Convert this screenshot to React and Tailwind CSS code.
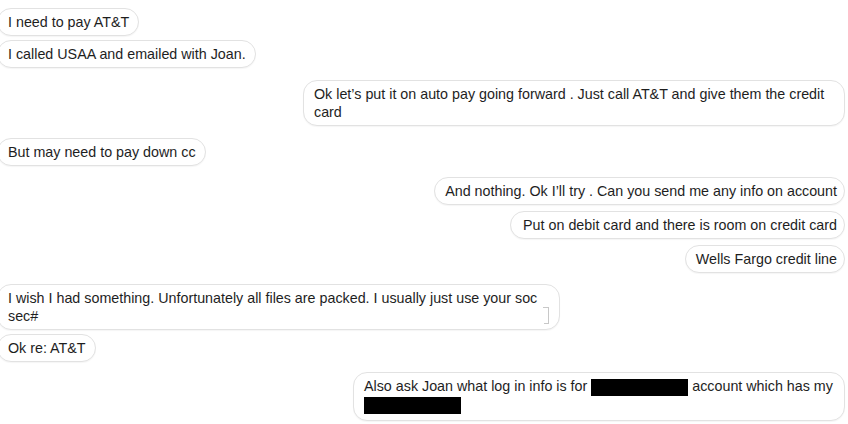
import React from 'react';

const Redacted = ({ className = '' }) => (
  <span className={`inline-block bg-black align-middle ${className}`} />
);

const Bubble = ({ side = 'left', className = '', children }) => (
  <div className={`flex ${side === 'right' ? 'justify-end' : 'justify-start'}`}>
    <div
      className={`rounded-[14px] border border-[#e2e2e2] bg-white py-[4px] text-[14.3px] leading-[18px] text-[#1e1e1e] shadow-[0_1px_1px_rgba(0,0,0,0.04)] ${
        side === 'right' ? 'pl-[10px] pr-[7px]' : 'pl-[10px] pr-[9px]'
      } ${className}`}
    >
      {children}
    </div>
  </div>
);

const App = () => {
  return (
    <div
      className="h-[424px] w-[848px] overflow-hidden bg-white pt-[8px] pr-[3px]"
      style={{ fontFamily: '"Liberation Sans", Arial, sans-serif' }}
    >
      <div className="-ml-[3px] flex flex-col gap-[4px]">
        <Bubble>I need to pay AT&amp;T</Bubble>
        <Bubble>I called USAA and emailed with Joan.</Bubble>
      </div>

      <div className="mt-[12px]">
        <Bubble side="right" className="w-[542px]">
          Ok let’s put it on auto pay going forward . Just call AT&amp;T and give them the credit card
        </Bubble>
      </div>

      <div className="-ml-[3px] mt-[12px]">
        <Bubble>But may need to pay down cc</Bubble>
      </div>

      <div className="mt-[11px] flex flex-col gap-[6px]">
        <Bubble side="right">And nothing. Ok I’ll try . Can you send me any info on account</Bubble>
        <Bubble side="right" className="pl-[12px]">Put on debit card and there is room on credit card</Bubble>
        <Bubble side="right">Wells Fargo credit line</Bubble>
      </div>

      <div className="-ml-[3px] mt-[11px] flex flex-col gap-[4px]">
        <Bubble className="relative w-[563px]">
          I wish I had something. Unfortunately all files are packed. I usually just use your soc sec#
          <span className="absolute right-[10px] bottom-[5px] h-[17px] w-[5px] border-r border-b border-[#c8c8c8]" />
          <span className="absolute right-[10px] top-[22px] h-[1px] w-[6px] bg-[#c8c8c8]" />
        </Bubble>
        <Bubble>Ok re: AT&amp;T</Bubble>
      </div>

      <div className="mt-[10px]">
        <Bubble side="right" className="w-[492px] pb-[6px]">
          Also ask Joan what log in info is for <Redacted className="h-[17px] w-[97px]" /> account which has my
          <br />
          <Redacted className="h-[17px] w-[97px]" />
        </Bubble>
      </div>
    </div>
  );
};

export default App;
